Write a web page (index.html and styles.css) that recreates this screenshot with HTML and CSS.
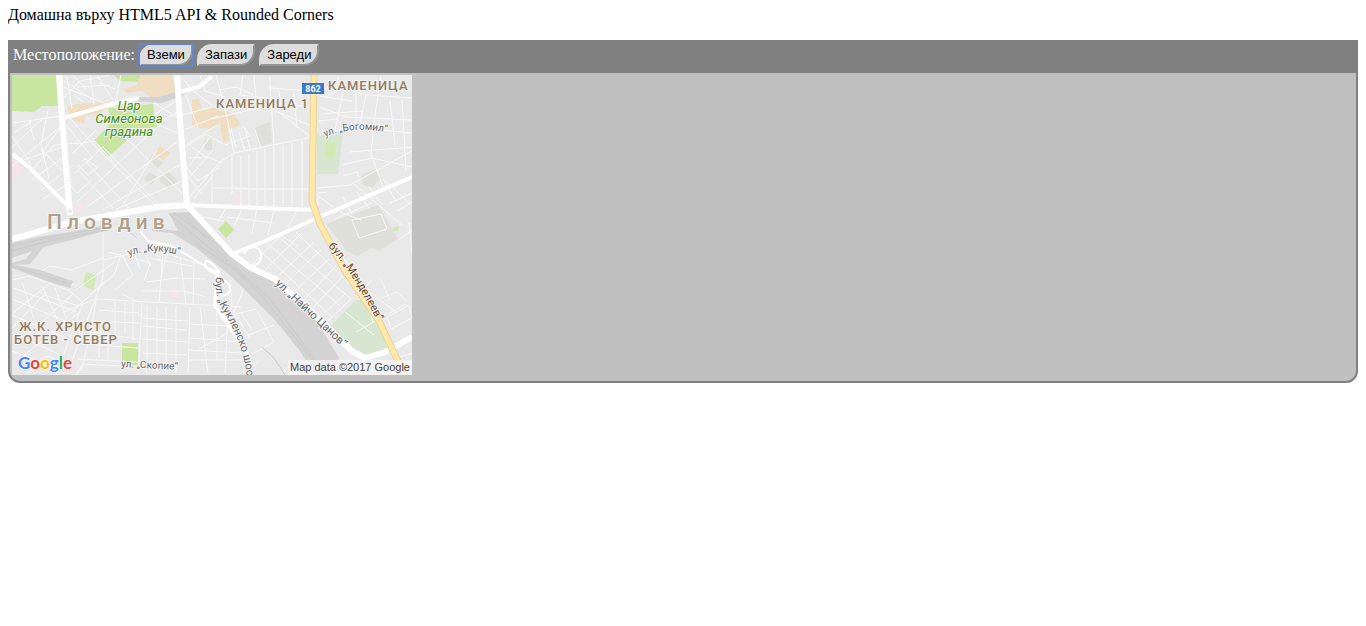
FILE: index.html
```html
<!DOCTYPE html>
<html lang="bg">
<head>
<meta charset="utf-8">
<title>Домашна върху HTML5 API &amp; Rounded Corners</title>
<link rel="stylesheet" href="styles.css">
</head>
<body>
<p class="intro">Домашна върху HTML5 API &amp; Rounded Corners</p>
<main class="panel">
  <div class="toolbar">
    <span>Местоположение:</span>
    <span class="focus-ring"><button type="button" class="leaf">Вземи</button></span>
    <button type="button" class="leaf">Запази</button>
    <button type="button" class="leaf">Зареди</button>
  </div>
  <div class="content">
    <svg class="map" viewBox="0 0 400 300" role="img" aria-label="Пловдив">
      <defs>
        <path id="bogomil" d="M313 62Q340 50 378 58"/>
        <path id="kukush" d="M117 181Q140 171 175 182"/>
        <path id="skopie" d="M109 292L175 295"/>
        <path id="naycho" d="M263 209L340 281"/>
        <path id="kuklensko" d="M204 202Q202 220 211 236Q232 270 235 303"/>
        <path id="mendeleev" d="M316 172C330 184 350 214 372 260"/>
      </defs>
      <rect class="land" width="400" height="300"/>
      <!-- parks and areas -->
      <g class="park">
        <path d="M0 0H45L46 31H30L22 37 0 36z"/>
        <path d="M102 0H130L128 7 108 6z"/>
        <path d="M96 33L141 29 143 47 145 52 128 54 97 81 82 66 100 47z"/>
        <path d="M110 268H126V290H110z"/>
      </g>
      <g class="green"><path d="M305 59L331 57 326 99H305z"/><path d="M319 251L344 225 353 225 378 275 356 283 340 277z"/></g>
      <g class="lightpark">
        <path d="M74 197L85 200 81 215 71 211z"/>
        <path d="M314 67H323V82H314z"/>
        <path d="M381 153L387 151 386 156 381 157z"/>
      </g>
      <g class="orange">
        <path d="M128 0H160L166 19 145 26 130 16 115 18 110 14 125 10z"/>
        <path d="M55 32L65 29 98 27 96 33 85 39 73 41 72 49 58 44z"/>
        <path d="M180 25L187 24 190 35 200 32 222 39 229 50 216 55 217 66 211 68 208 48 200 54 180 52z"/>
        <path d="M148 71L158 78 151 86 142 78z"/>
      </g>
      <g class="building">
        <path d="M140 79L151 88 145 95 136 86zM155 95L166 106 157 114 147 105zM137 97L145 102 140 110 132 104z"/>
        <path d="M192 65H200V75H193zM242 53L258 47 260 68 248 71zM349 100L364 94 368 104 360 113 350 109z"/>
        <path d="M314 149L366 130 386 164 367 176 360 173 345 181 334 176 326 164z"/>
      </g>
      <g class="health"><path d="M0 82L12 92 2 105 0 103zM63 132L70 128 72 134 66 138zM164 70L168 66 170 71zM221 117L226 120 231 130H221zM159 215H166V222H159z"/></g>
      <!-- residential streets -->
      <g class="street">
        <path d="M0 48L49 41M2 58L20 46M0 72L29 45M0 91L48 52M8 86L51 72M15 101L42 70 67 68M20 105L53 81M29 115L61 90M31 124L60 107M36 35L29 70 37 104M17 45L22 65M0 61L19 89M49 52L31 76 60 105"/>
        <path d="M57 42L78 66 145 132M54 50L80 82 63 98M65 69L83 66 102 88M71 83L86 92 76 100 66 90M80 105L65 118 58 110M61 78L84 55M75 88L90 72M65 127L145 52M75 132L165 67M90 135L169 89M104 134L171 106M67 96L101 133M75 88L117 133M91 72L149 132M111 60L173 121M145 75L112 128M145 49L170 60"/>
        <path d="M46 10L110 35M50 24L68 6 98 0M61 0L74 14M78 0L82 30M85 0L101 25M50 5L80 24M63 21L71 27M87 8L103 14M55 2L60 34M65 12L98 10M102 33L109 0M142 28L168 44M143 39L166 25M145 48L168 36"/>
        <path d="M168 0L181 16 200 30M170 40L204 31M174 20L186 53M174 54L206 41M174 70L205 50M178 90L198 62M175 105L201 75M182 123L200 102M171 88L186 106 208 92M178 70L196 84M172 73L194 59 211 69M204 0L214 38 222 78M175 100L190 119M188 0L193 16 213 22"/>
        <path d="M175 125L208 87 222 78 300 62M200 44L258 30 300 31M220 80V119M210 88L196 82 177 83M222 114H300M229 81V132M237 79V131M245 76V132M253 74V132M262 71V134M271 70V134M280 68V134M290 66V134M200 113H235M213 70L238 61 231 51M219 53L224 73M227 57L233 76M233 53L238 74M242 52L249 72M258 10L262 70M258 34L300 51M264 35L300 63M258 0V13L299 16M266 14L272 39M282 18L285 53M231 0L228 20 256 23M242 0L245 35M207 15L225 12 241 20"/>
        <path d="M308 13H331L355 20 400 23M308 32L334 42 400 45M307 60L340 52 400 58M369 0L362 48 359 79 371 112M326 0V16L315 21M331 17L323 56M344 18V48M354 20L348 48M309 39L350 36M338 77L400 72M330 90L360 83 400 92M305 113L338 110 400 76M342 109L390 150M331 101L345 97 347 103M378 25L383 70M390 25L394 95M308 21L340 26M307 46L325 44 334 55"/>
        <path d="M306 130V118L315 117M305 120L321 132M331 122L340 139M345 117L358 134M357 112L370 130M371 104L384 126M374 106L400 131M323 144L360 128M328 137L349 145M378 128L400 118M386 136L400 127M387 165L400 155M397 148L400 180"/>
        <path d="M0 239L43 204 62 210M0 253L32 220 67 231M4 270L61 219M11 281L68 237M2 213L65 237M0 224L61 249M0 240L54 263M0 258L47 279M0 276L42 291M10 207L22 244M30 211L47 248M43 213L54 242"/>
        <path d="M0 205L17 201 58 216 71 228 53 276 44 300M55 299L91 203 91 153M50 238L83 224 230 232M94 205L58 239 36 263M91 185L139 174 188 189M64 215L104 186M91 183L60 195 38 191 26 198M96 177L109 180 102 200 82 217M110 180L121 200 104 214M116 181L138 188 132 206M122 178L128 194M131 175L139 191M143 174L150 190M155 178L149 202M137 183L180 191M134 207L164 203 194 204M151 178L147 227M168 182L174 229M182 188L181 231M131 216L172 216 194 222M110 219L130 229"/>
        <path d="M84 225L79 257 69 296M130 229L126 300M103 227V265M113 228V258M121 228V265M86 235L127 238M81 246L127 248M77 257L126 264M73 269L126 273M65 284L125 287M135 230V299M145 231V298M154 231V297M164 231V298M178 232L176 299M130 243L175 246M131 251L174 255M130 264L176 267M131 278L175 280M96 258V286M87 254V283M188 231L196 299M205 234V286M216 236L213 299M178 249L218 251M178 263L229 267M177 275L230 278M177 285L238 285M187 274L214 259M13 300L34 281 60 288M64 300L71 289 108 291"/>
        <path d="M208 243L244 234M224 265L262 250M229 238L240 255M218 205L220 230 209 235M247 287L235 295M234 208L222 237 238 263M245 236L262 267 240 279"/>
        <path d="M240 190L269 160 285 171M250 198L290 158M262 205L302 167M269 213L309 175M278 221L317 184M287 230L324 191M295 239L330 202M303 247L334 218M311 251L339 224M245 173L319 241M255 168L328 231M266 161L338 223M284 157L344 215M302 149L350 205M345 222L360 205M361 248L353 214 385 238M368 203L378 225M368 224L385 217 395 226M376 239L394 229M344 257L367 244M333 237L362 260"/>
        <path d="M200 94L200 128M214 133L206 147M230 134L222 152M245 134L240 158M262 135L256 160M285 135L276 153M215 142L262 148M190 142L212 146M382 284L400 278M386 292L400 289"/>
        <path d="M375 242L397 230 400 243 379 254zM340 145L369 139 375 154 347 163z"/>
      </g>
      <path class="park" d="M206 154L214 146 222 155 214 163z"/>
      <!-- rail yard -->
      <g class="rail">
        <path d="M157 138L177 137 190 149 220 180 243 195 263 208 303 243 327 283 320 300H305L287 275 263 245 220 202 183 172 160 158 140 156 140 153 166 156z"/>
        <path d="M0 168L30 161 52 158 90 151 92 156 60 165 32 172 18 189 0 190 0 188 14 184 20 176 0 183zM0 189L28 195 61 206 58 213 38 207 16 199 0 193z"/>
        <path d="M119 22H147L160 18 169 16 172 21 149 28 122 26z"/>
      </g>
      <g class="track">
        <path d="M0 176L43 164 96 155M0 191L58 209M157 139L237 206M162 138L229 186M170 138L212 182 258 224 310 294M0 171L34 163 91 153M183 168L215 189 245 215 305 290M112 153L125 163M250 272L262 283 273 300"/>
      </g>
      <!-- main roads -->
      <g class="road">
        <path class="ramp" d="M128 156L136 166 160 171 200 195 207 197"/>
        <path d="M206 195L203 230 222 258 236 280 239 300"/>
        <path class="wide" d="M47 0L50 43 58 140M165 0L168 45 175 130M0 164L36 154 60 147 145 132 175 130"/>
        <path d="M0 79L17 92 57 132M52 43L100 29 127 23M167 17L187 12 200 1M175 130L300 135M220 179L251 167 312 140 400 102"/>
        <path class="wide" d="M174 129L220 179 239 193 263 204 300 237 340 276 353 283 373 277 400 262"/>
        <path class="ramp" d="M232 179C237 168 250 171 249 182Q248 191 238 191M207 196Q192 179 193 191Q196 197 206 199M207 203Q220 208 218 216Q214 222 206 220"/>
      </g>
      <circle class="dot" cx="58" cy="136" r="2"/>
      <path class="highway-edge" d="M302 0L300 126 308 149 333 196 367 246 393 301"/>
      <path class="highway" d="M302 0L300 126 308 149 333 196 367 246 393 301"/>
      <!-- labels -->
      <g class="district">
        <text x="204" y="33">КАМЕНИЦА 1</text>
        <text x="316" y="15">КАМЕНИЦА</text>
        <text x="7" y="256">Ж.К. ХРИСТО</text>
        <text x="2" y="269">БОТЕВ - СЕВЕР</text>
      </g>
      <text class="city" x="35" y="154">Пловдив</text>
      <g class="parkname">
        <text x="117" y="35">Цар</text>
        <text x="117" y="48">Симеонова</text>
        <text x="117" y="61">градина</text>
      </g>
      <g class="streetname">
        <text><textPath href="#bogomil">ул. „Богомил“</textPath></text>
        <text><textPath href="#kukush">ул. „Кукуш“</textPath></text>
        <text><textPath href="#skopie">ул. „Скопие“</textPath></text>
        <text class="large"><textPath href="#naycho">ул. „Найчо Цанов“</textPath></text>
        <text class="large"><textPath href="#kuklensko">бул. „Кукленско шос</textPath></text>
        <text class="large brown"><textPath href="#mendeleev">бул. „Менделеев“</textPath></text>
      </g>
      <rect class="shield" x="290" y="8" width="22" height="11"/>
      <text class="shield-text" x="301" y="17">862</text>
      <text class="google" x="6" y="294"><tspan class="b">G</tspan><tspan class="r">o</tspan><tspan class="y">o</tspan><tspan class="b">g</tspan><tspan class="g">l</tspan><tspan class="r">e</tspan></text>
      <rect class="credit-back" x="276" y="285" width="124" height="15"/>
      <text class="credit" x="398" y="296">Map data ©2017 Google</text>
    </svg>
  </div>
</main>
</body>
</html>
```
FILE: styles.css
```css
body {
  margin: 8px;
  background: #fff;
  color: #000;
  font: 16px/18px "Liberation Serif", serif;
}
.intro { margin: -2px 0 16px; }
.panel {
  border: 2px solid #808080;
  border-radius: 0 0 12px 12px;
  background: #c0c0c0;
  overflow: hidden;
}
.toolbar {
  display: flex;
  align-items: center;
  gap: 4px;
  padding: 2px 3px 7px;
  background: #808080;
  color: #fff;
}
.leaf {
  display: block;
  padding: 1px 6px;
  border: 2px solid;
  border-color: #ddd #949494 #949494 #ddd;
  border-radius: 15px 0;
  background: #ddd;
  color: #000;
  font: 13px/16px "Liberation Sans", sans-serif;
}
.focus-ring {
  border-radius: 2px;
  outline: 2px solid #5f87cf;
  outline-offset: -1px;
}
.content { padding: 2px 2px 6px; }
.map { display: block; width: 400px; max-width: 100%; }
.land { fill: #e9e9e9; }
.park { fill: #c8e6a0; }
.lightpark { fill: #d0eab4; }
.green { fill: #d6e6d0; }
.orange { fill: #f0dec3; }
.building { fill: #dfe0da; }
.health { fill: #f7e4eb; }
.rail { fill: #d3d3d3; }
.track { fill: none; stroke: #cbcbcb; stroke-width: 1; }
.street { fill: none; stroke: #f8f8f8; stroke-width: 1; }
.road { fill: none; stroke: #fff; stroke-width: 4; stroke-linejoin: round; }
.road .wide { stroke-width: 6; }
.road .ramp { stroke-width: 2; }
.dot { fill: #e5e5e5; }
.highway-edge { fill: none; stroke: #ead49c; stroke-width: 7; }
.highway { fill: none; stroke: #ffe8a8; stroke-width: 5; }
.map text { font-family: Roboto, sans-serif; paint-order: stroke; stroke: #f3f3f3; stroke-width: 2; }
.district { fill: #937b5c; font-size: 13px; font-weight: 500; letter-spacing: 1px; }
.city { fill: #afa188; font-size: 21px; font-weight: 500; letter-spacing: 5px; }
.parkname { fill: #42900f; font-size: 13px; font-style: italic; font-weight: 400; text-anchor: middle; }
.streetname { fill: #686868; font-size: 10px; }
.large { font-size: 11px; }
.brown { fill: #70430c; }
.shield { fill: #3c78c8; }
.map .shield-text { fill: #fff; stroke: none; font-size: 9px; font-weight: 700; text-anchor: middle; }
.map .google { font: 700 17px Lato, sans-serif; stroke: #fff; stroke-width: 1; }
.b { fill: #4285f4; }
.r { fill: #ea4335; }
.y { fill: #fbbc05; }
.g { fill: #34a853; }
.credit-back { fill: #f5f5f5; fill-opacity: .8; }
.map .credit { fill: #444; stroke: none; font: 11px "Liberation Sans", sans-serif; text-anchor: end; }
```
